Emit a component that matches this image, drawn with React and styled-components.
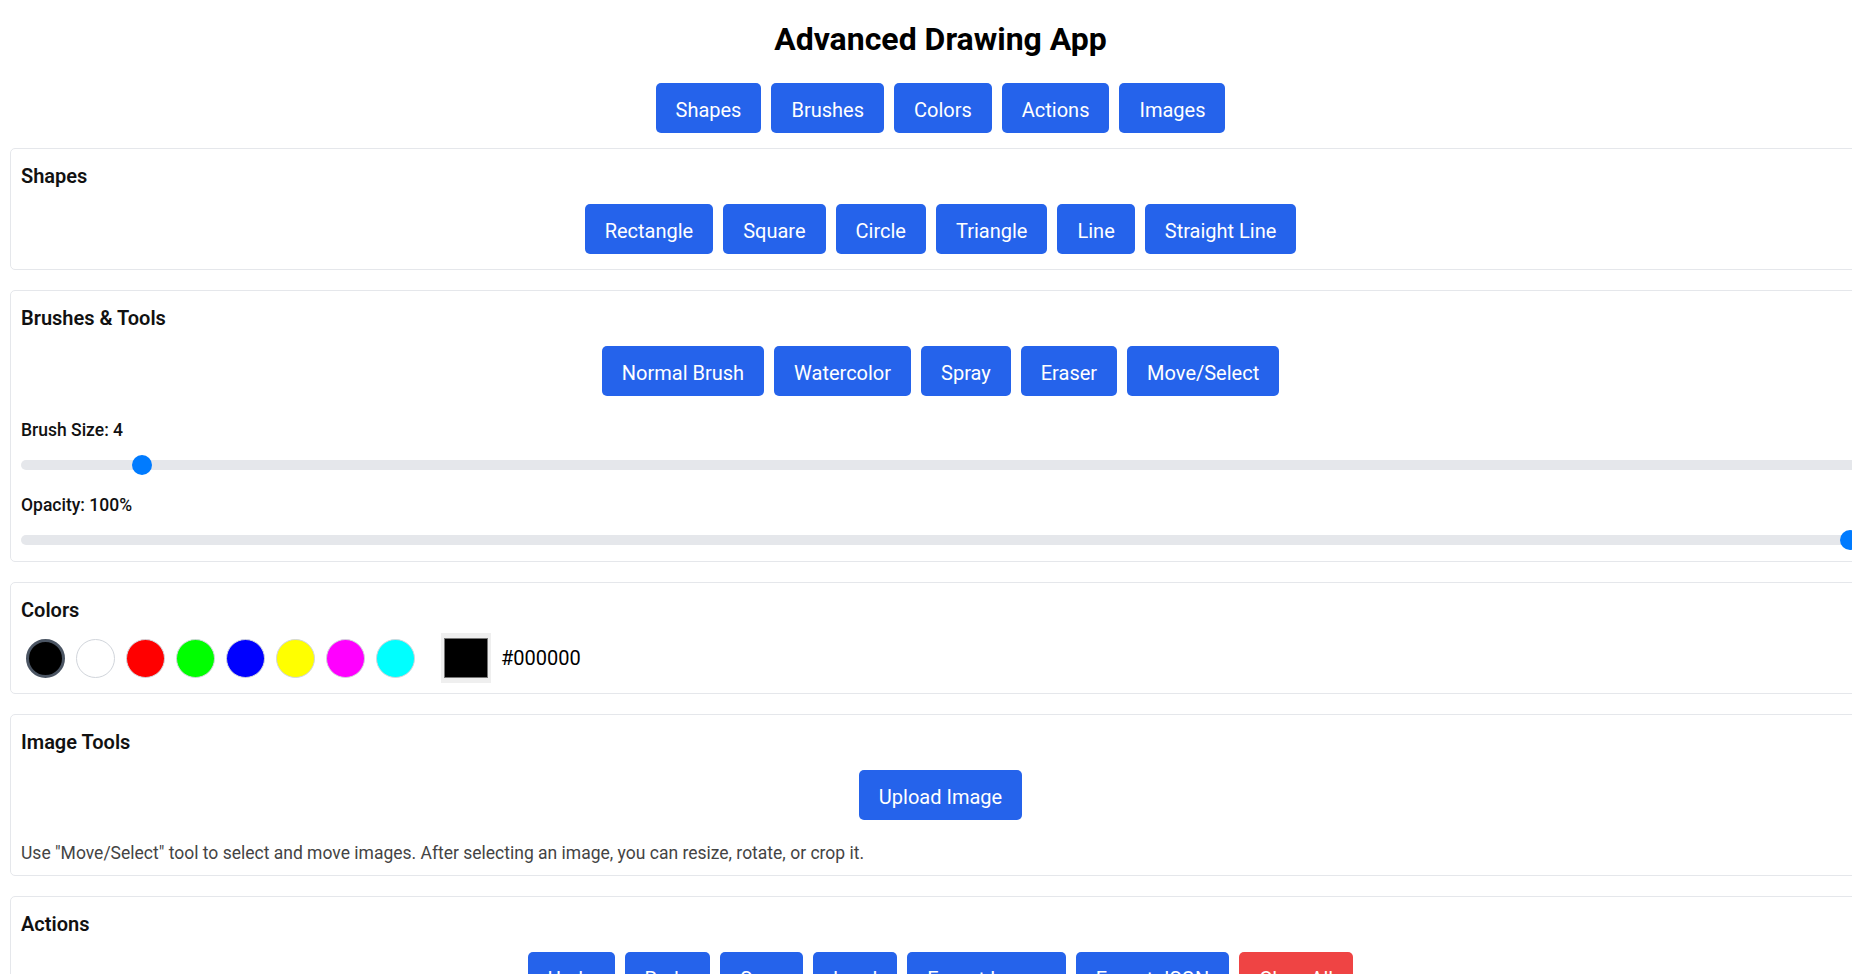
import React, { useState } from 'react';
import styled, { createGlobalStyle } from 'styled-components';

const GlobalStyle = createGlobalStyle`
  * { box-sizing: border-box; }
  html { overflow: hidden; }
  body {
    margin: 10px;
    background: #ffffff;
    color: #000000;
    font-family: Roboto, "Segoe UI", "Noto Sans", Arial, sans-serif;
  }
`;

const Page = styled.div`
  width: calc(100% + 19px);
`;

const Title = styled.h1`
  margin: 11px 0 0;
  text-align: center;
  font-size: 32px;
  font-weight: 700;
  line-height: 36px;
  color: #000;
`;

const Nav = styled.nav`
  display: flex;
  justify-content: center;
  gap: 10px;
  margin: 26px 0 15px;
`;

const Button = styled.button`
  height: 50px;
  padding: 13.5px 20px 10.5px;
  border: none;
  border-radius: 5px;
  background: ${(p) => (p.$danger ? '#ef4444' : '#2563eb')};
  color: #ffffff;
  font-family: inherit;
  font-size: 20px;
  font-weight: 400;
  line-height: 26px;
  white-space: nowrap;
  cursor: pointer;
`;

const Card = styled.section`
  border: 1px solid #e5e7eb;
  border-radius: 5px;
  padding: 14px 10px 10px;
  margin-bottom: 20px;
  background: #fff;
`;

const SectionTitle = styled.h3`
  margin: 0 0 10px;
  font-size: 20px;
  font-weight: 600;
  line-height: 26px;
  color: #111;
`;

const ButtonRow = styled.div`
  display: flex;
  justify-content: center;
  flex-wrap: wrap;
  gap: 10px;
  padding: 5px 0;
`;

const SliderGroup = styled.div`
  padding-top: 18px;
`;

const SliderLabel = styled.label`
  display: block;
  font-size: 17.5px;
  font-weight: 500;
  line-height: 23px;
  color: #111;
`;

const Range = styled.input`
  -webkit-appearance: none;
  appearance: none;
  display: block;
  width: 100%;
  height: 10px;
  margin: 17.5px 0 6.5px;
  padding: 0;
  background: #e5e7eb;
  border-radius: 5px;
  outline: none;

  &::-webkit-slider-thumb {
    -webkit-appearance: none;
    appearance: none;
    width: 20px;
    height: 20px;
    border-radius: 50%;
    background: #007bff;
    border: none;
    cursor: pointer;
  }
  &::-moz-range-thumb {
    width: 20px;
    height: 20px;
    border-radius: 50%;
    background: #007bff;
    border: none;
  }
`;

const ColorRow = styled.div`
  display: flex;
  align-items: center;
  height: 50px;
`;

const Swatches = styled.div`
  display: flex;
  gap: 11px;
  margin-left: 5px;
`;

const Swatch = styled.button`
  width: 39px;
  height: 39px;
  padding: 0;
  border-radius: 50%;
  background: ${(p) => p.$color};
  border: ${(p) => (p.$selected ? '3px solid #4b5563' : '1px solid #d1d5db')};
  cursor: pointer;
`;

const ColorPicker = styled.input`
  -webkit-appearance: none;
  appearance: none;
  margin: 0 0 0 26px;
  width: 50px;
  height: 50px;
  padding: 0;
  border: none;
  background: #efefef;
  cursor: pointer;

  &::-webkit-color-swatch-wrapper {
    padding: 5px 3px;
  }
  &::-webkit-color-swatch {
    border: 1.5px solid #767676;
    border-radius: 0;
  }
`;

const HexText = styled.span`
  margin-left: 10px;
  font-size: 20px;
  line-height: 26px;
  color: #000;
`;

const Hint = styled.p`
  margin: 17px 0 0;
  font-size: 17.5px;
  line-height: 23px;
  color: #444;
`;

const NAV = ['Shapes', 'Brushes', 'Colors', 'Actions', 'Images'];
const SHAPES = ['Rectangle', 'Square', 'Circle', 'Triangle', 'Line', 'Straight Line'];
const BRUSHES = ['Normal Brush', 'Watercolor', 'Spray', 'Eraser', 'Move/Select'];
const COLORS = ['#000000', '#ffffff', '#ff0000', '#00ff00', '#0000ff', '#ffff00', '#ff00ff', '#00ffff'];
const ACTIONS = ['Undo', 'Redo', 'Save', 'Load', 'Export Image', 'Export JSON'];

export default function App() {
  const [size, setSize] = useState(4);
  const [opacity, setOpacity] = useState(100);
  const [color, setColor] = useState('#000000');

  return (
    <Page>
      <GlobalStyle />
      <Title>Advanced Drawing App</Title>
      <Nav>
        {NAV.map((n) => (
          <Button key={n}>{n}</Button>
        ))}
      </Nav>

      <Card>
        <SectionTitle>Shapes</SectionTitle>
        <ButtonRow>
          {SHAPES.map((s) => (
            <Button key={s}>{s}</Button>
          ))}
        </ButtonRow>
      </Card>

      <Card>
        <SectionTitle>Brushes &amp; Tools</SectionTitle>
        <ButtonRow>
          {BRUSHES.map((b) => (
            <Button key={b}>{b}</Button>
          ))}
        </ButtonRow>
        <SliderGroup>
          <SliderLabel>Brush Size: {size}</SliderLabel>
          <Range
            type="range"
            min="1"
            max="50"
            value={size}
            onChange={(e) => setSize(Number(e.target.value))}
          />
        </SliderGroup>
        <SliderGroup>
          <SliderLabel>Opacity: {opacity}%</SliderLabel>
          <Range
            type="range"
            min="0"
            max="100"
            value={opacity}
            onChange={(e) => setOpacity(Number(e.target.value))}
          />
        </SliderGroup>
      </Card>

      <Card>
        <SectionTitle>Colors</SectionTitle>
        <ColorRow>
          <Swatches>
            {COLORS.map((c) => (
              <Swatch
                key={c}
                $color={c}
                $selected={c === color}
                onClick={() => setColor(c)}
                aria-label={c}
              />
            ))}
          </Swatches>
          <ColorPicker
            type="color"
            value={color}
            onChange={(e) => setColor(e.target.value)}
          />
          <HexText>{color}</HexText>
        </ColorRow>
      </Card>

      <Card>
        <SectionTitle>Image Tools</SectionTitle>
        <ButtonRow>
          <Button>Upload Image</Button>
        </ButtonRow>
        <Hint>
          Use "Move/Select" tool to select and move images. After selecting an image, you can resize, rotate, or crop it.
        </Hint>
      </Card>

      <Card>
        <SectionTitle>Actions</SectionTitle>
        <ButtonRow>
          {ACTIONS.map((a) => (
            <Button key={a}>{a}</Button>
          ))}
          <Button $danger>Clear All</Button>
        </ButtonRow>
      </Card>
    </Page>
  );
}
